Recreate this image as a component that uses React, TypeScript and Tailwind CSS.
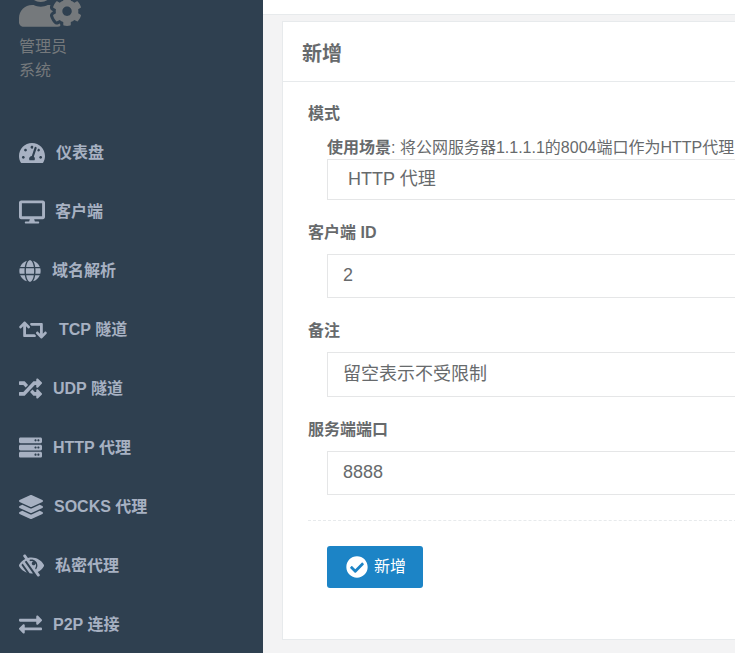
import { FaCheckCircle, FaDesktop, FaExchangeAlt, FaGlobe, FaLayerGroup, FaLowVision, FaRandom, FaRetweet, FaServer, FaTachometerAlt, FaUserCog } from 'react-icons/fa';

const navItems = [
  { icon: FaTachometerAlt, label: '仪表盘', size: 26, gap: 'gap-[11px]' },
  { icon: FaDesktop, label: '客户端', size: 26, gap: 'gap-[10px]' },
  { icon: FaGlobe, label: '域名解析', size: 22, gap: 'gap-[11px]' },
  { icon: FaRetweet, label: 'TCP 隧道', size: 28, gap: 'gap-[12px]' },
  { icon: FaRandom, label: 'UDP 隧道', size: 23, gap: 'gap-[11px]' },
  { icon: FaServer, label: 'HTTP 代理', size: 23, gap: 'gap-[11px]' },
  { icon: FaLayerGroup, label: 'SOCKS 代理', size: 24, gap: 'gap-[11px]' },
  { icon: FaLowVision, label: '私密代理', size: 25, gap: 'gap-[11px]' },
  { icon: FaExchangeAlt, label: 'P2P 连接', size: 23, gap: 'gap-[11px]' },
];

const font = "font-['Liberation_Sans','Noto_Sans_CJK_SC',sans-serif]";

function Field({ label, value, tall }: { label: string; value: string; tall?: boolean }) {
  return (
    <div className="mb-[21px]">
      <label className="-ml-[19px] block h-[24px] text-[16px] leading-[24px] font-bold text-[#676a6c]">{label}</label>
      <div className={`mt-[9px] border border-[#e5e6e7] pl-[15px] text-[18px] text-[#676a6c] ${tall ? 'h-[45px] leading-[42px]' : 'h-[44px] leading-[40px]'}`}>{value}</div>
    </div>
  );
}

export default function App() {
  return (
    <div className={`flex h-[653px] w-[735px] overflow-hidden bg-[#f3f3f4] ${font}`}>
      <aside className="w-[263px] shrink-0 bg-[#2f4050]">
        <div className="flex h-[116px] flex-col pl-[19px]">
          <FaUserCog size={62} className="-mt-[29px] shrink-0 text-[#75797c]" />
          <div className="mt-[2px] text-[16px] leading-[24px] text-[#75797c]">管理员</div>
          <div className="text-[16px] leading-[24px] text-[#75797c]">系统</div>
        </div>
        <nav className="mt-[7px]">
          {navItems.map((item) => (
            <div key={item.label} className={`flex h-[59px] items-center pl-[19px] text-[#a7b1c2] ${item.gap}`}>
              <item.icon size={item.size} className="shrink-0" />
              <span className="text-[16px] font-bold">{item.label}</span>
            </div>
          ))}
        </nav>
      </aside>

      <main className="min-w-0 flex-1">
        <div className="h-[15px] border-b border-[#e7eaec] bg-white" />
        <section className="mt-[6px] ml-[19px] h-[619px] w-[470px] border border-r-0 border-[#e7eaec] bg-white">
          <h2 className="h-[60px] border-b border-[#e7eaec] pt-[1px] pl-[19px] text-[20px] leading-[62px] font-bold text-[#676a6c]">新增</h2>
          <form className="pt-[20px] pl-[44px]">
            <label className="-ml-[19px] block h-[24px] text-[16px] leading-[24px] font-bold text-[#676a6c]">模式</label>
            <p className="mt-[10px] h-[23px] text-[16px] leading-[24px] whitespace-nowrap text-[#676a6c]">
              <b>使用场景</b>: 将公网服务器1.1.1.1的8004端口作为HTTP代理
            </p>
            <div className="h-[41px] border border-[#e5e6e7] pl-[20px] text-[18px] leading-[38px] text-[#676a6c]">HTTP 代理</div>
            <div className="mt-[21px]">
              <Field label="客户端 ID" value="2" />
              <Field label="备注" value="留空表示不受限制" tall />
              <Field label="服务端端口" value="8888" />
            </div>
            <div className="-ml-[19px] mt-[25px] border-t border-dashed border-[#e7eaec]" />
            <button type="button" className="mt-[25px] flex h-[42px] w-[96px] items-center justify-center gap-[6px] rounded-[3px] bg-[#1c84c6] pl-[2px] text-[16px] text-white">
              <FaCheckCircle size={22} />
              新增
            </button>
          </form>
        </section>
      </main>
    </div>
  );
}
